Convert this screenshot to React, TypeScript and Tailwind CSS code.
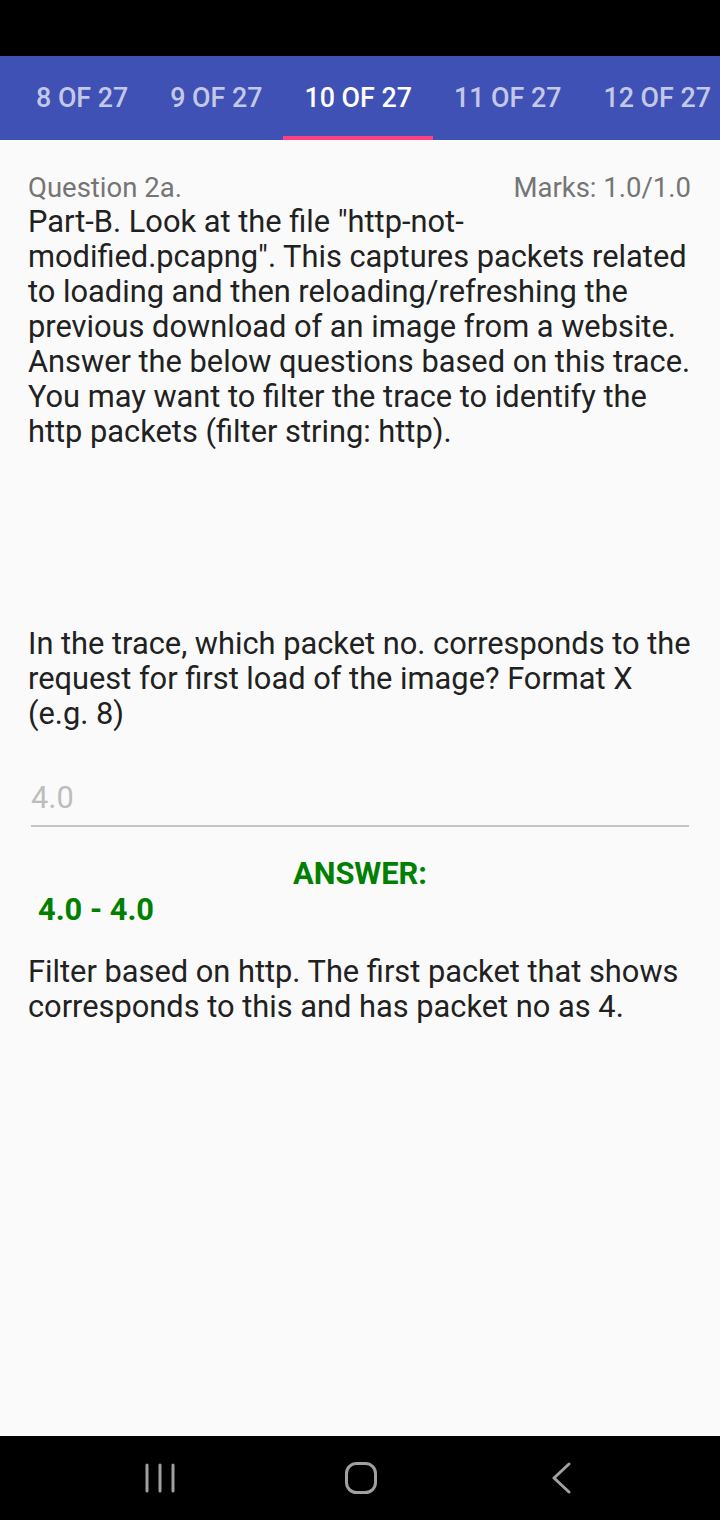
const tabs = ["8 OF 27", "9 OF 27", "10 OF 27", "11 OF 27", "12 OF 27"];

export default function App() {
  return (
    <div className="w-[720px] h-[1520px] flex flex-col bg-[#fafafa] font-['Roboto',sans-serif] overflow-hidden">
      <div className="h-[56px] bg-black shrink-0" />
      <div className="h-[84px] bg-[#3f51b5] shrink-0 flex pl-[15px] overflow-hidden">
        {tabs.map((t) => {
          const active = t === "10 OF 27";
          return (
            <div
              key={t}
              className={
                "shrink-0 h-full px-[21px] pt-[4px] flex items-center justify-center text-[26.8px] font-medium border-b-4 " +
                (active ? "text-white border-[#ff4081]" : "text-white/70 border-transparent")
              }
            >
              {t}
            </div>
          );
        })}
      </div>

      <main className="flex-1 px-[28px] pt-[30px] text-[30.8px] leading-[35px] text-[#212121]">
        <div className="flex justify-between text-[27.5px] leading-[35px] text-[#757575]">
          <span>Question 2a.</span>
          <span className="pr-[1px]">Marks: 1.0/1.0</span>
        </div>
        <p className="-mt-[1px]">
          Part-B. Look at the file "http-not-modified.pcapng". This captures packets related to loading and then
          reloading/refreshing the previous download of an image from a website. Answer the below questions based on
          this trace. You may want to filter the trace to identify the http packets (filter string: http).
        </p>
        <div className="h-[177px]" />
        <p>
          In the trace, which packet no. corresponds to the request for first load of the image? Format X (e.g. 8)
        </p>
        <div className="mt-[42px] mx-[3px] pb-[2px] border-b-2 border-[#c4c4c4] text-[#bdbdbd] leading-[50px]">4.0</div>
        <div className="mt-[29px] text-center font-bold text-[#008000]">ANSWER:</div>
        <div className="mt-[1px] pl-[10px] font-bold text-[#008000]">4.0 - 4.0</div>
        <p className="mt-[27px]">
          Filter based on http. The first packet that shows corresponds to this and has packet no as 4.
        </p>
      </main>

      <div className="h-[84px] bg-black shrink-0 flex items-center pl-[130px] gap-[141px]">
        <div className="w-[60px] flex justify-center">
          <svg width="30" height="30" viewBox="0 0 30 30">
            <g stroke="#a0a0a0" strokeWidth="3" strokeLinecap="round">
              <line x1="2" y1="2" x2="2" y2="28" />
              <line x1="15" y1="2" x2="15" y2="28" />
              <line x1="28" y1="2" x2="28" y2="28" />
            </g>
          </svg>
        </div>
        <div className="w-[60px] flex justify-center">
          <svg width="32" height="32" viewBox="0 0 32 32">
            <rect x="1.5" y="1.5" width="29" height="29" rx="10" fill="none" stroke="#a0a0a0" strokeWidth="3" />
          </svg>
        </div>
        <div className="w-[60px] flex justify-center">
          <svg width="20" height="32" viewBox="0 0 20 32">
            <polyline points="17,2 2,16 17,30" fill="none" stroke="#a0a0a0" strokeWidth="3" strokeLinecap="round" strokeLinejoin="round" />
          </svg>
        </div>
      </div>
    </div>
  );
}
